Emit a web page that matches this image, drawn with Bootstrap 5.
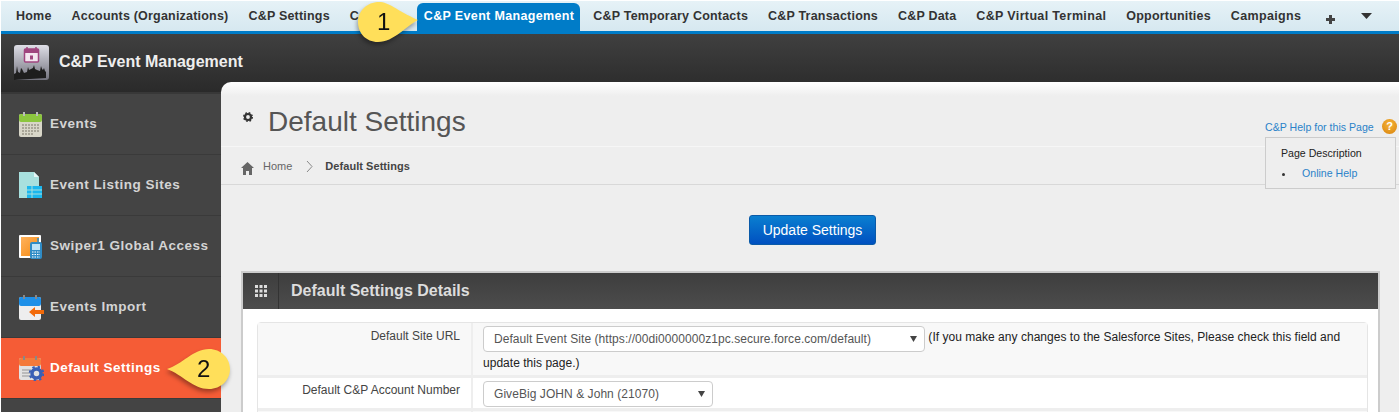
<!DOCTYPE html>
<html lang="en">
<head>
<meta charset="utf-8">
<title>Default Settings</title>
<link href="https://cdn.jsdelivr.net/npm/bootstrap@5.3.0/dist/css/bootstrap.min.css" rel="stylesheet">
<style>
html,body{height:412px;overflow:hidden;background:#fff;font-family:"Liberation Sans",Arial,sans-serif;font-size:12px;color:#333}
.page-wrap{position:relative;height:412px;overflow:hidden;padding:1px 0 0 1px}
.tabbar{height:33px;padding-left:5px;background:linear-gradient(#e6f2f7,#d6e8f0);border-bottom:3px solid #007cc8}
.tabitem{padding:0 10px;font-weight:700;font-size:12.5px;line-height:30px;color:#333;white-space:nowrap;letter-spacing:.2px;text-decoration:none}
.tabitem.hidden-tab{width:77px}
.tabitem.roomy{letter-spacing:.35px}
.tabitem.current{background:#007cc8;color:#fff;border-radius:6px 6px 0 0;padding:0 6px 0 7px;margin:2px 3px 0 0;line-height:27px;height:28px;letter-spacing:.35px}
.tab-tool{width:36px;display:flex;align-items:center;justify-content:center}
.tab-plus{height:36px;margin-left:1px}
.tab-caret{height:30px}
.brandbar{height:58px;background:linear-gradient(#404040,#2a2a2a);padding:0 0 2px 13px}
.brandbar h1{font-size:16px;font-weight:700;color:#eee;margin:0 0 0 10px}
.shell{height:320px}
.sidenav{width:220px;flex:none;background:#444;border-top:2px solid #383838}
.sideitem{height:61px;flex:none;display:flex;align-items:center;padding-left:18px;border-bottom:1px solid #3a3a3a;color:#d4d4d4;font-weight:700;font-size:13.5px;letter-spacing:.5px;text-decoration:none}
.sideslot{width:31px;flex:none;display:flex}
.sideitem.current{background:#f55c36;color:#fff;border-bottom-color:#3a3a3a}
.mainpane{flex:1;position:relative;margin-top:-10px;height:330px;background:linear-gradient(#fff,#eee 14px);border-top-left-radius:10px;min-width:0}
.titlezone{height:65px;padding:15px 0 0 22px;border-bottom:1px solid #f6f6f6}
.titlezone h2{font-size:28px;font-weight:400;color:#555;margin:0;line-height:50px}
.gearmark{margin:15px 15px 0 0}
.crumbzone{height:38px;padding:2px 0 0 20px;border-bottom:1px solid #d8d8d8;font-size:11px;color:#666}
.crumbzone b{color:#444;letter-spacing:.05px}
.homemark{margin:3px 9px 0 0}
.crumbsep{margin:0 12px 0 14px}
.actionzone{padding:30px 0 0 5px;height:86px}
.savebtn{--bs-btn-padding-y:0;--bs-btn-padding-x:0;width:127px;height:30px;font-size:14px;line-height:28px;color:#fff;background:linear-gradient(#0a7fd0,#0050c0);border:1px solid #0a5aa8;border-radius:3px}
.detailbox{margin:0 19px 0 20px;border:2px solid #ccc;border-bottom:0;background:#fff;height:200px}
.detailhead{height:36px;background:linear-gradient(#3e3e3e,#4c4c4c);color:#ddd}
.gridcell{width:36px;height:36px;display:flex;align-items:center;justify-content:center;border-right:1px solid #333}
.detailhead h3{font-size:16px;font-weight:700;margin:0 0 0 12px;color:#ddd}
.formwrap{padding:13px 10px 0 14px}
.formtable{border-collapse:separate;border-spacing:0;width:100%;border:1px solid #e5e5e5;border-radius:4px 4px 0 0}
.formtable th,.formtable td{font-size:12px;vertical-align:top;color:#222;font-weight:400;border-bottom:3px solid #eee}
.formtable th{width:215px;text-align:right;padding:2px 11px 0 0;color:#444;border-right:2px solid #eee}
.formtable td{padding:3px 10px 0;letter-spacing:.03px}
.formtable tr.shaded th,.formtable tr.shaded td{background:#f8f8f8}
.row-a td,.row-a th{height:53px;line-height:23px}
.row-b td,.row-b th{height:33px}
.row-b th{padding-top:3px}
.row-c th{height:20px}
.notetext{position:relative;top:0}
.formtable .form-select.picker{display:inline-block;vertical-align:top;font-size:12px;color:#555;height:26px;padding:0 24px 0 10px;border:1px solid #ccc;border-radius:4px;line-height:24px;letter-spacing:.06px;
background-image:url("data:image/svg+xml,%3Csvg xmlns='http://www.w3.org/2000/svg' width='8' height='8'%3E%3Cpath d='M0 1h7L3.500 7z' fill='%23444'/%3E%3C/svg%3E");background-size:8px 8px;background-position:right 6px center}
.picker.wide{width:442px}
.picker.mid{width:230px}
.helpbox{position:absolute;right:3px;top:38px;width:131px}
.helplink{color:#2a82c9;text-decoration:none;white-space:nowrap;font-size:10.6px}
.helpball{width:15px;height:15px;border-radius:50%;background:radial-gradient(circle at 50% 35%,#f5b53b,#d9820a);color:#fff;font-weight:700;font-size:11px;line-height:15px;text-align:center;margin:0 -1px 0 0;position:relative;top:-1px}
.helppanel{margin-top:1px;height:52px;background:#eee;border:1px solid #ccc;padding:9px 0 0 15px;color:#222;font-size:10.6px;line-height:12px}
.helplist{list-style:none;margin:8px 0 0;padding:0}
.helplist a{color:#2a82c9;text-decoration:none}
.helplist li::before{content:"";display:inline-block;width:3px;height:3px;border-radius:50%;background:#333;margin:0 17px 1px 1px}
.callout{position:absolute;width:84px;height:48px;filter:drop-shadow(-1px 3px 2px rgba(0,0,0,.35))}
.callout span{position:absolute;font-size:24px;color:#111;line-height:28px;top:8px}
.callout-one{left:356px;top:0}
.callout-one span{left:21px}
.callout-two{left:165px;top:346px}
.callout-two span{left:32px;top:9px}
</style>
</head>
<body>
<div class="page-wrap">
  <nav class="tabbar d-flex align-items-start">
    <a class="tabitem" href="#">Home</a>
    <a class="tabitem" href="#">Accounts (Organizations)</a>
    <a class="tabitem" href="#">C&amp;P Settings</a>
    <a class="tabitem hidden-tab" href="#">C</a>
    <a class="tabitem current" href="#">C&amp;P Event Management</a>
    <a class="tabitem" href="#">C&amp;P Temporary Contacts</a>
    <a class="tabitem" href="#">C&amp;P Transactions</a>
    <a class="tabitem" href="#">C&amp;P Data</a>
    <a class="tabitem roomy" href="#">C&amp;P Virtual Terminal</a>
    <a class="tabitem" href="#">Opportunities</a>
    <a class="tabitem roomy" href="#">Campaigns</a>
    <span class="tab-tool tab-plus"><svg width="11" height="11" viewBox="0 0 11 11"><path d="M4 1h3v3h3v3H7v3H4V7H1V4h3z" fill="#444"/></svg></span>
    <span class="tab-tool tab-caret"><svg width="11" height="7" viewBox="0 0 11 7"><path d="M0 0h11L5.500 6z" fill="#333"/></svg></span>
  </nav>

  <header class="brandbar d-flex align-items-center">
    <svg width="35" height="35" viewBox="0 0 35 35">
      <defs><linearGradient id="lg" x1="0" y1="0" x2="0" y2="1"><stop offset="0" stop-color="#dedee6"/><stop offset="1" stop-color="#73737e"/></linearGradient></defs>
      <rect width="35" height="35" rx="3" fill="url(#lg)"/>
      <rect x="10.500" y="4" width="14" height="13" rx="1" fill="#f4e6f0" stroke="#a0457f" stroke-width="1.500"/>
      <rect x="10" y="4" width="15" height="4" fill="#a0457f"/>
      <path d="M13 2v4M22 2v4" stroke="#a0457f" stroke-width="1.500"/>
      <path d="M16 10.500h3v4h-3z" fill="#a0457f"/>
      <path d="M0 35V29l2-1 1-7 1 6 2 1 1-5 1 1 2 4 3-1 1-5 1 3 2-1 2-1 1-3 1 4 2 1 3 1 1-5 1 3 1 1 1-2 1 3 1 1v6z" fill="#1e1e1e"/>
    </svg>
    <h1>C&amp;P Event Management</h1>
  </header>

  <div class="shell d-flex">
    <aside class="sidenav d-flex flex-column">
      <a class="sideitem" href="#">
        <span class="sideslot"><svg width="23" height="25" viewBox="0 0 23 25"><rect x="0" y="2" width="23" height="23" rx="2" fill="#d8d6c8"/><rect x="0" y="2" width="23" height="8" rx="2" fill="#8cc63f"/><path d="M5 0v4M18 0v4" stroke="#bbb" stroke-width="2"/><path d="M3 13h17M3 16h17M3 19h17M3 22h12" stroke="#a9a698" stroke-width="2" stroke-dasharray="2 1"/></svg></span>
        Events
      </a>
      <a class="sideitem" href="#">
        <span class="sideslot"><svg width="23" height="26" viewBox="0 0 23 26"><path d="M0 0h15l5 5v21H0z" fill="#a8e0de"/><path d="M15 0l5 5h-5z" fill="#e6f6f6"/><path d="M8 14h15v12H8z" fill="#1bb7ee"/><path d="M8 18h15M8 22h15M13 14v12" stroke="#a8e0de"/></svg></span>
        Event Listing Sites
      </a>
      <a class="sideitem" href="#">
        <span class="sideslot"><svg width="23" height="25" viewBox="0 0 23 25"><defs><linearGradient id="og" x1="0" y1="0" x2="1" y2="1"><stop offset="0" stop-color="#ffb25c"/><stop offset="1" stop-color="#f58a12"/></linearGradient></defs><rect x="0" y="1" width="22" height="23" rx="1" fill="#fff"/><rect x="2" y="3" width="18" height="19" fill="url(#og)"/><path d="M13 8h8a2 2 0 0 1 2 2v13a2 2 0 0 1-2 2h-8a2 2 0 0 1-2-2V10a2 2 0 0 1 2-2z" fill="#2f8cc6"/><rect x="13" y="10" width="8" height="6" fill="#bfe4f7"/><path d="M19 8V4" stroke="#2f8cc6" stroke-width="1.500"/><path d="M13 18h8M13 20.500h8M13 23h8" stroke="#fff" stroke-dasharray="1.500 1"/></svg></span>
        Swiper1 Global Access
      </a>
      <a class="sideitem" href="#">
        <span class="sideslot"><svg width="25" height="25" viewBox="0 0 25 25"><rect x="0" y="2" width="22" height="23" rx="2" fill="#eee"/><rect x="0" y="2" width="22" height="9" rx="2" fill="#1e90e8"/><path d="M5 0v4M17 0v4" stroke="#888" stroke-width="2"/><path d="M10 17l6-5v3h9v4h-9v3z" fill="#f26a0a"/></svg></span>
        Events Import
      </a>
      <a class="sideitem current" href="#">
        <span class="sideslot"><svg width="25" height="25" viewBox="0 0 25 25"><rect x="0" y="2" width="22" height="22" rx="2" fill="#e2e2e2"/><rect x="0" y="2" width="22" height="8" rx="2" fill="#f47a3a"/><path d="M5 0v4M17 0v4" stroke="#888" stroke-width="2"/><path d="M3 14h9M3 17h8M3 20h8" stroke="#bbb" stroke-width="2"/><circle cx="17.500" cy="17.500" r="4.500" fill="none" stroke="#3a5fb5" stroke-width="3.500"/><circle cx="17.500" cy="17.500" r="6.800" fill="none" stroke="#3a5fb5" stroke-width="2" stroke-dasharray="2.500 3"/></svg></span>
        Default Settings
      </a>
    </aside>

    <main class="mainpane">
      <div class="titlezone d-flex align-items-start">
        <svg class="gearmark" width="10" height="10" viewBox="0 0 10 10"><circle cx="5" cy="5" r="3" fill="none" stroke="#333" stroke-width="2.200"/><circle cx="5" cy="5" r="4.300" fill="none" stroke="#333" stroke-width="1.400" stroke-dasharray="1.700 1.700"/></svg>
        <h2>Default Settings</h2>
      </div>
      <div class="crumbzone d-flex align-items-center">
        <svg class="homemark" width="13" height="13" viewBox="0 0 13 13"><path d="M6.500 0L13 6h-2v7H8V9H5v4H2V6H0z" fill="#666"/></svg>
        <span>Home</span>
        <svg class="crumbsep" width="7" height="11" viewBox="0 0 7 11"><path d="M1 0l5 5.500L1 11" fill="none" stroke="#888"/></svg>
        <b>Default Settings</b>
      </div>
      <div class="actionzone text-center">
        <button class="btn savebtn" type="button">Update Settings</button>
      </div>
      <section class="detailbox">
        <div class="detailhead d-flex align-items-center">
          <span class="gridcell"><svg width="12" height="12" viewBox="0 0 12 12"><path d="M0 0h3v3H0zM4.500 0h3v3h-3zM9 0h3v3H9zM0 4.500h3v3H0zM4.500 4.500h3v3h-3zM9 4.500h3v3H9zM0 9h3v3H0zM4.500 9h3v3h-3zM9 9h3v3H9z" fill="#ddd"/></svg></span>
          <h3>Default Settings Details</h3>
        </div>
        <div class="formwrap">
          <table class="formtable">
            <tr class="shaded row-a">
              <th>Default Site URL</th>
              <td><select class="form-select picker wide"><option>Default Event Site (https://00di0000000z1pc.secure.force.com/default)</option></select> (If you make any changes to the Salesforce Sites, Please check this field and update this page.)</td>
            </tr>
            <tr class="row-b">
              <th>Default C&amp;P Account Number</th>
              <td><select class="form-select picker mid"><option>GiveBig JOHN &amp; John (21070)</option></select></td>
            </tr>
            <tr class="shaded row-c"><th></th><td></td></tr>
          </table>
        </div>
      </section>
      <div class="helpbox">
        <div class="d-flex justify-content-between align-items-center">
          <a class="helplink" href="#">C&amp;P Help for this Page</a>
          <span class="helpball">?</span>
        </div>
        <div class="helppanel">
          Page Description
          <ul class="helplist"><li><a href="#">Online Help</a></li></ul>
        </div>
      </div>
    </main>
  </div>

  <div class="callout callout-one">
    <svg width="64" height="46" viewBox="0 0 64 46"><path d="M23 2C33 2 40 10 62 20 50 26 38 42 22 42 10 42 2 33 2 22 2 11 11 2 23 2z" fill="#ffdf5a"/></svg>
    <span>1</span>
  </div>
  <div class="callout callout-two">
    <svg width="68" height="46" viewBox="0 0 68 46"><path d="M44 3C56 3 65 12 65 23 65 34 56 43 44 43 28 43 18 29 2 23 18 18 28 3 44 3z" fill="#ffdf5a"/></svg>
    <span>2</span>
  </div>
</div>
<script src="https://cdn.jsdelivr.net/npm/bootstrap@5.3.0/dist/js/bootstrap.bundle.min.js"></script>
</body>
</html>
